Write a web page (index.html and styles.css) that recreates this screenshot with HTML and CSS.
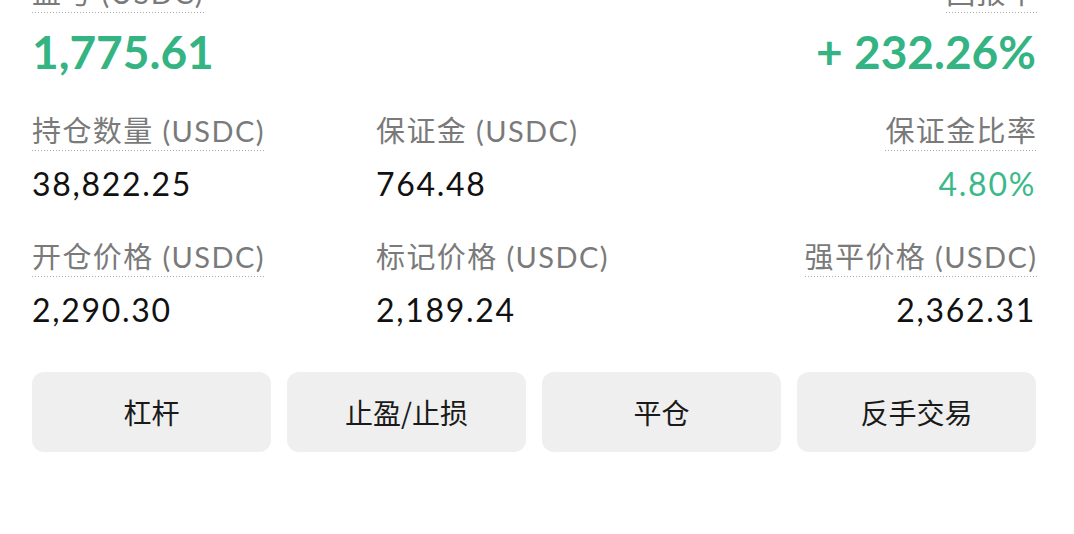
FILE: index.html
```html
<!DOCTYPE html>
<html lang="zh-CN">

<head>
    <meta charset="UTF-8">
    <meta name="viewport" content="width=device-width, initial-scale=1.0">
    <title>持仓详情</title>
    <link rel="stylesheet" href="styles.css">
</head>

<body>

    <div class="position">

        <div class="row row-main">
            <div class="cell">
                <span class="label">盈亏 (USDC)</span>
                <span class="value big green">1,775.61</span>
            </div>
            <div class="cell cell-right">
                <span class="label">回报率</span>
                <span class="value big green">+ 232.26%</span>
            </div>
        </div>

        <div class="row">
            <div class="cell">
                <span class="label">持仓数量 (USDC)</span>
                <span class="value">38,822.25</span>
            </div>
            <div class="cell">
                <span class="label plain">保证金 (USDC)</span>
                <span class="value">764.48</span>
            </div>
            <div class="cell cell-right">
                <span class="label">保证金比率</span>
                <span class="value green">4.80%</span>
            </div>
        </div>

        <div class="row">
            <div class="cell">
                <span class="label">开仓价格 (USDC)</span>
                <span class="value">2,290.30</span>
            </div>
            <div class="cell">
                <span class="label plain">标记价格 (USDC)</span>
                <span class="value">2,189.24</span>
            </div>
            <div class="cell cell-right">
                <span class="label">强平价格 (USDC)</span>
                <span class="value">2,362.31</span>
            </div>
        </div>

        <div class="actions">
            <button class="action">杠杆</button>
            <button class="action">止盈/止损</button>
            <button class="action">平仓</button>
            <button class="action">反手交易</button>
        </div>

    </div>

</body>

</html>
```

FILE: styles.css
```css
/* Position detail card */
body {
    margin: 0;
    background-color: #fff;
    font-family: Lato, "Noto Sans CJK SC", sans-serif;
    color: #1a1a1a;
}

.position {
    padding: 0 38px 0 32px;
    margin-top: -26px;
}

.row {
    display: grid;
    grid-template-columns: 344px 1fr auto;
    margin-bottom: 34px;
}

.cell {
    display: flex;
    flex-direction: column;
    align-items: flex-start;
}

.cell-right {
    grid-column: 3;
    align-items: flex-end;
}

.label {
    font-size: 29px;
    line-height: 38px;
    color: #7a7a7a;
    padding-bottom: 1px;
    letter-spacing: 1.4px;
    background-image: linear-gradient(to right, #a8a8a8 1px, transparent 1px);
    background-size: 3px 1px;
    background-repeat: repeat-x;
    background-position: left bottom;
}

.cell-right .label {
    margin-right: -1.4px;
}

.label.plain {
    background-image: none;
}

.value {
    margin-top: 13px;
    font-size: 32px;
    line-height: 40px;
    letter-spacing: 1.7px;
    color: #111;
}

.value.big {
    margin-top: 13px;
    font-size: 46px;
    line-height: 52px;
    font-weight: 700;
    letter-spacing: 0;
}

.green {
    color: #3cb98a;
}

.value.big.green {
    color: #34b383;
}

.actions {
    display: grid;
    grid-template-columns: repeat(4, 1fr);
    gap: 16px;
    margin-top: 42px;
}

.action {
    height: 80px;
    border: none;
    border-radius: 12px;
    background-color: #efefef;
    font-family: "Noto Sans CJK SC", sans-serif;
    font-size: 28px;
    color: #1a1a1a;
}
```
